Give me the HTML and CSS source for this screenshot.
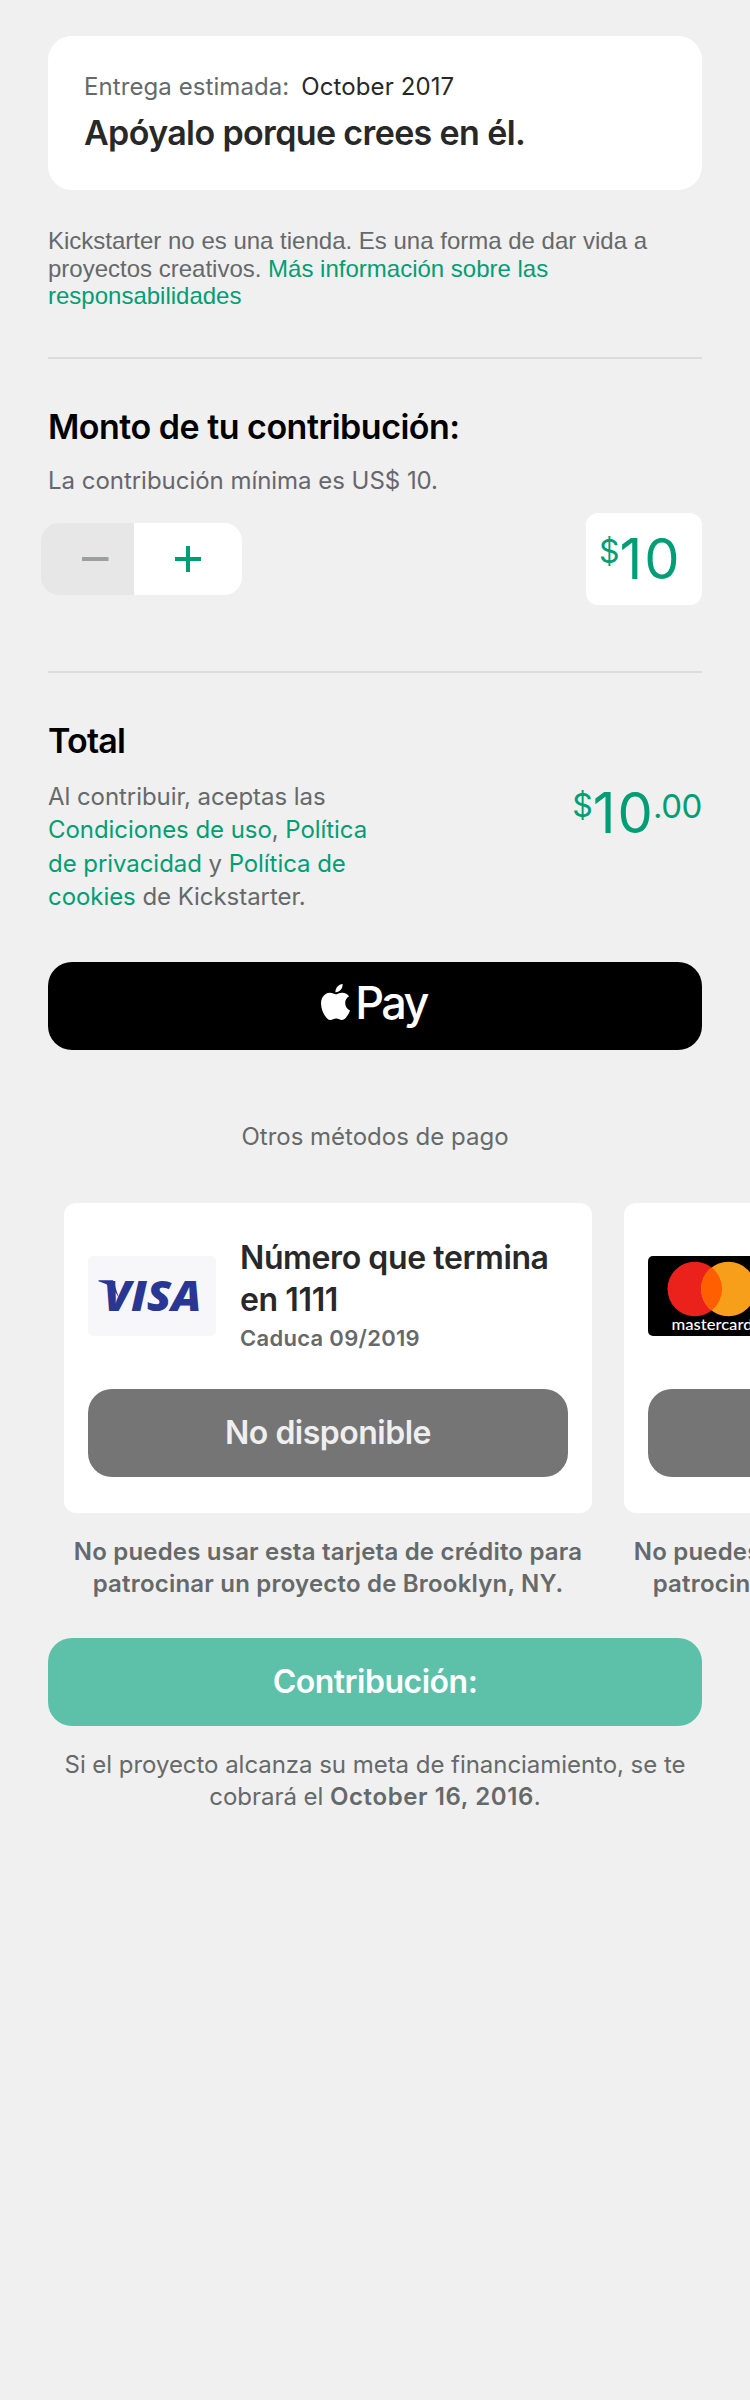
FILE: index.html
```
<!DOCTYPE html>
<html lang="es">
<head>
<meta charset="utf-8">
<title>Contribución</title>
<link rel="stylesheet" href="styles.css">
</head>
<body>
<main class="page">
  <section class="reward">
    <p class="reward-date"><span class="reward-label">Entrega estimada:</span><span class="reward-value">October 2017</span></p>
    <h2 class="reward-title">Apóyalo porque crees en él.</h2>
  </section>

  <p class="disclaimer">Kickstarter no es una tienda. Es una forma de dar vida a<br>proyectos creativos. <a class="link">Más información sobre las<br>responsabilidades</a></p>

  <section class="amount">
    <h2 class="heading heading-amount">Monto de tu contribución:</h2>
    <p class="minimum">La contribución mínima es US$ 10.</p>
    <div class="amount-row">
      <div class="stepper">
        <button class="step step-minus" aria-label="Menos"><svg width="28" height="28" viewBox="0 0 28 28"><path d="M1 14H27.500" stroke="#9b9f9e" stroke-width="4"/></svg></button>
        <button class="step step-plus" aria-label="Más"><svg width="28" height="28" viewBox="0 0 28 28"><path d="M1 14H27M14 1V27" stroke="#009e74" stroke-width="4"/></svg></button>
      </div>
      <div class="price price-box"><span class="price-sign">$</span><span class="price-main">10</span></div>
    </div>
  </section>

  <section class="total">
    <h2 class="heading heading-total">Total</h2>
    <div class="total-row">
      <p class="terms">Al contribuir, aceptas las<br><a class="link">Condiciones de uso</a>, <a class="link">Política<br>de privacidad</a> y <a class="link">Política de<br>cookies</a> de Kickstarter.</p>
      <div class="price price-total"><span class="price-sign">$</span><span class="price-main">10</span><span class="price-cents">.00</span></div>
    </div>
  </section>

  <button class="apple-pay">
    <svg class="apple-mark" viewBox="2.2 0 19.6 24" preserveAspectRatio="none" fill="#fff"><path d="M12.152 6.896c-.948 0-2.415-1.078-3.96-1.04-2.04.027-3.91 1.183-4.961 3.014-2.117 3.675-.546 9.103 1.519 12.09 1.013 1.454 2.208 3.09 3.792 3.039 1.52-.065 2.09-.987 3.935-.987 1.831 0 2.35.987 3.96.948 1.637-.026 2.676-1.48 3.676-2.948 1.156-1.688 1.636-3.325 1.662-3.415-.039-.013-3.182-1.221-3.22-4.857-.026-3.04 2.48-4.494 2.597-4.559-1.429-2.09-3.623-2.324-4.39-2.376-2-.156-3.675 1.09-4.61 1.09zM15.53 3.83c.843-1.012 1.4-2.427 1.245-3.83-1.207.052-2.662.805-3.532 1.818-.78.896-1.454 2.338-1.273 3.714 1.338.104 2.715-.688 3.559-1.701"/></svg>
    <span class="apple-text">Pay</span>
  </button>

  <p class="other">Otros métodos de pago</p>

  <section class="cards">
    <article class="method">
      <div class="card">
        <div class="card-head">
          <svg class="brand" width="128" height="80" viewBox="0 0 128 80">
            <rect width="128" height="80" rx="5" fill="#f7f7fa"/>
            <path d="M10.500 24.300H25L31 42Q25 29 10.500 25.200Z" fill="#2a3693"/>
            <text class="visa" x="15.500" y="55" textLength="98" lengthAdjust="spacingAndGlyphs">VISA</text>
          </svg>
          <div class="card-info">
            <h3 class="card-title">Número que termina<br>en 1111</h3>
            <p class="card-expiry">Caduca 09/2019</p>
          </div>
        </div>
        <button class="unavailable">No disponible</button>
      </div>
      <p class="card-note">No puedes usar esta tarjeta de crédito para<br>patrocinar un proyecto de Brooklyn, NY.</p>
    </article>
    <article class="method">
      <div class="card">
        <div class="card-head">
          <svg class="brand" width="128" height="80" viewBox="0 0 128 80">
            <rect width="128" height="80" rx="5" fill="#000"/>
            <circle cx="46.800" cy="33" r="27.300" fill="#eb221c"/>
            <circle cx="80.400" cy="33" r="27.300" fill="#f79e1b"/>
            <path d="M63.600 11.500a27.300 27.300 0 0 1 0 43a27.300 27.300 0 0 1 0-43z" fill="#ff5f00"/>
            <text class="mastercard" x="23.500" y="73.800" textLength="81" lengthAdjust="spacingAndGlyphs">mastercard</text>
          </svg>
        </div>
        <button class="unavailable">No disponible</button>
      </div>
      <p class="card-note">No puedes usar esta tarjeta de crédito para<br>patrocinar un proyecto de Brooklyn, NY.</p>
    </article>
  </section>

  <button class="pledge">Contribución:</button>
  <p class="footnote">Si el proyecto alcanza su meta de financiamiento, se te<br>cobrará el <strong>October 16, 2016</strong>.</p>
</main>
</body>
</html>
```
FILE: styles.css
```
* { box-sizing: border-box; margin: 0; padding: 0; }

body {
  background: #f0f0f0;
  color: #656969;
  font: 400 24px/32px Inter, "Liberation Sans", sans-serif;
}

button { border: 0; font: inherit; }
svg { display: block; }

.page {
  width: 750px;
  height: 2400px;
  padding: 36px 48px 0;
  overflow: hidden;
}

.link { color: #009e74; }

.reward {
  height: 154px;
  padding: 35px 36px 0;
  border-radius: 24px;
  background: #fff;
}
.reward-date { display: flex; gap: 12px; }
.reward-label { letter-spacing: 0.08px; }
.reward-value { color: #282828; letter-spacing: 0.1px; }
.reward-title {
  margin-top: 9px;
  color: #282828;
  font-size: 34px;
  font-weight: 600;
  line-height: 42px;
  letter-spacing: -0.63px;
}

.disclaimer {
  height: 83px;
  margin-top: 37px;
  font-family: "Liberation Sans", Arial, sans-serif;
  line-height: 27.6px;
}

.amount, .total { border-top: 2px solid #dcdcdc; }
.amount { margin-top: 47px; padding-top: 47px; }
.total { margin-top: 66px; padding-top: 47px; }

.heading {
  color: #000;
  font-size: 34px;
  font-weight: 600;
  line-height: 42px;
}
.heading-amount { letter-spacing: -0.5px; }
.heading-total { letter-spacing: -0.8px; }

.minimum { margin-top: 17px; color: #66666c; letter-spacing: -0.03px; }

.amount-row {
  display: flex;
  align-items: center;
  justify-content: space-between;
  height: 92px;
  margin-top: 16px;
}

.stepper {
  display: flex;
  width: 201px;
  height: 72px;
  margin-left: -7px;
  border-radius: 18px;
  overflow: hidden;
}
.step { display: flex; align-items: center; }
.step-minus { width: 93px; padding-left: 40px; background: #e7e7e7; }
.step-plus { width: 108px; padding-left: 40px; background: #fff; }

.price {
  display: flex;
  align-items: flex-start;
  color: #009e74;
}
.price-sign { font-size: 32px; }
.price-main { font-size: 56px; letter-spacing: 2px; }
.price-cents { margin-left: -2px; font-size: 33px; line-height: 53px; letter-spacing: -0.4px; }

.price-box {
  width: 116px;
  height: 92px;
  padding-left: 13px;
  border-radius: 12px;
  background: #fff;
}
.price-box .price-sign { line-height: 77px; }
.price-box .price-main { line-height: 92px; }
.price-total .price-sign { line-height: 51px; }
.price-total .price-main { line-height: 67px; }

.total-row {
  display: flex;
  justify-content: space-between;
  height: 133px;
  margin-top: 18px;
}
.terms { line-height: 33.3px; letter-spacing: -0.06px; }

.apple-pay {
  display: flex;
  justify-content: center;
  gap: 5px;
  width: 100%;
  height: 88px;
  margin-top: 49px;
  padding-right: 2px;
  border-radius: 24px;
  background: #000;
  color: #fff;
}
.apple-mark { width: 29px; height: 36px; margin-top: 22px; }
.apple-text { font-size: 45px; font-weight: 500; line-height: 81px; letter-spacing: -2.7px; }

.other { margin-top: 71px; text-align: center; }

.cards {
  display: flex;
  gap: 32px;
  margin: 50px -48px 0 16px;
  overflow: hidden;
}
.method { flex: 0 0 528px; }
.card {
  height: 310px;
  padding: 34px 24px 0;
  border-radius: 12px;
  background: #fff;
}
.card-head {
  display: flex;
  align-items: center;
  gap: 24px;
  height: 118px;
}
.brand { flex: none; }
.card-title {
  color: #282828;
  font-size: 32px;
  font-weight: 600;
  line-height: 42px;
  letter-spacing: -0.4px;
  white-space: nowrap;
}
.card-expiry {
  margin-top: 2px;
  font-size: 22px;
  font-weight: 600;
  line-height: 30px;
  letter-spacing: 0.3px;
}
.card-info { height: 118px; }

.visa { fill: #2a3693; font: italic 800 43px "Open Sans", sans-serif; }
.mastercard { fill: #fff; font: 500 15px Lato, sans-serif; }

.unavailable, .pledge {
  display: block;
  width: 100%;
  height: 88px;
  border-radius: 24px;
  font-size: 32px;
  font-weight: 600;
  letter-spacing: -0.5px;
}
.unavailable { margin-top: 34px; background: #757575; color: #efefef; }

.card-note {
  margin-top: 23px;
  font-weight: 600;
  letter-spacing: 0.2px;
  text-align: center;
  white-space: nowrap;
}

.pledge { margin-top: 38px; background: #5cc1a8; color: #fff; }

.footnote { margin-top: 23px; letter-spacing: -0.04px; text-align: center; white-space: nowrap; }
.footnote strong { font-weight: 600; letter-spacing: 0.6px; }
```
